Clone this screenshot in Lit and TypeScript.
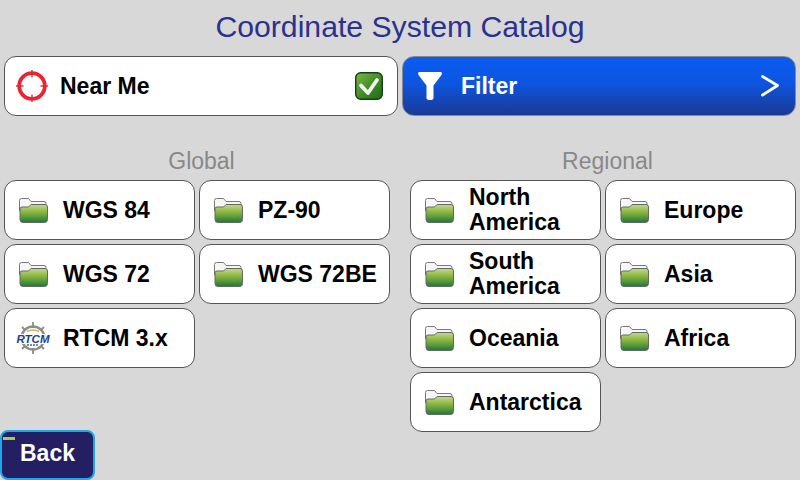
import { LitElement, html, css, svg } from "lit";
import { customElement } from "lit/decorators.js";

let uid = 0;
const folder = () => {
  const id = `fg${uid++}`;
  return html`<svg class="ico" width="29" height="25" viewBox="0 0 29 25">
    <defs><linearGradient id=${id} x1="0" y1="0" x2="0" y2="1">
      <stop offset="0" stop-color="#c4dc84"/><stop offset="0.45" stop-color="#86b33f"/><stop offset="1" stop-color="#1c7a38"/>
    </linearGradient></defs>
    <path d="M0.500 13V2.500q0-2 2-2h7l2.500 3h13q2 0 2 2v4" fill="#f6f6f6" stroke="#777" stroke-width="1"/>
    <path d="M1 21V11q0-2 2-2h6.500l2.500-2.500h14q2.500 0 2.500 2.500v12.500q0 3-3 3H4q-3 0-3-3z" fill="url(#${id})" stroke="#666" stroke-width="1"/>
  </svg>`;
};

const target = html`<svg class="target" width="32" height="32" viewBox="0 0 32 32">
  <path d="M16 0v7.500M16 24.500v7.500M0 16h7.500M24.500 16h7.500" stroke="#666" stroke-width="1.400"/>
  <circle cx="16" cy="16" r="12.800" fill="none" stroke="#ee2233" stroke-width="3.800"/>
</svg>`;

const check = html`<svg width="28" height="28" viewBox="0 0 28 28">
  <defs><linearGradient id="cg" x1="0" y1="0" x2="1" y2="1">
    <stop offset="0" stop-color="#7fb84a"/><stop offset="0.55" stop-color="#3f8a22"/><stop offset="1" stop-color="#1f6b14"/>
  </linearGradient></defs>
  <rect x="0.700" y="0.700" width="26.600" height="26.600" rx="5" fill="url(#cg)" stroke="#12401a" stroke-width="1.400"/>
  <path d="M6 13.500l7 7.500 9-13" fill="none" stroke="#f2f2f2" stroke-width="3.800" stroke-linecap="round" stroke-linejoin="round"/>
</svg>`;

const funnel = html`<svg width="24" height="28" viewBox="0 0 24 28">
  <path d="M1 0h22q1.500 0.500 0.500 3L15.500 13.500V26q0 2-3.500 2T8.500 26V13.500L0.500 3Q-0.500 0.500 1 0z" fill="#fff"/>
</svg>`;

const chevron = html`<svg width="18" height="22" viewBox="0 0 18 22">
  <path d="M1.500 1.500L16.500 10.500 1.500 20" fill="none" stroke="#fff" stroke-width="2.800" stroke-linecap="round" stroke-linejoin="round"/>
</svg>`;

const rtcm = html`<svg class="ico" width="36" height="34" viewBox="0 0 36 34">
  ${svg`<circle cx="18" cy="17" r="11.500" fill="none" stroke="#8f8f8f" stroke-width="2.400"/>
  <path d="M18 1v6M18 27v6M10 9l-3-3M26 9l3-3M10 25l-3 3M26 25l3 3" stroke="#8a8a8a" stroke-width="1.800"/>
  <path d="M12 10.500q6-3 12 0" fill="none" stroke="#d8b23c" stroke-width="1.600"/>
  <path d="M12 24h12" stroke="#3a6aa8" stroke-width="1.600" stroke-dasharray="2 1"/>`}
  <text x="18" y="22" text-anchor="middle" class="rtcm-t">RTCM</text>
</svg>`;

const globalItems = ["WGS 84", "PZ-90", "WGS 72", "WGS 72BE"];
const regionalItems = [
  "North America", "Europe", "South America", "Asia", "Oceania", "Africa", "Antarctica",
];

@customElement("app-root")
export class AppRoot extends LitElement {
  static styles = css`
    :host {
      display: block;
      width: 800px;
      height: 480px;
      background: #d8d8d8;
      font-family: "Liberation Sans", Arial, sans-serif;
      overflow: hidden;
    }
    .page { display: flex; flex-direction: column; height: 480px; }
    .title {
      flex: none;
      height: 56px;
      line-height: 54px;
      text-align: center;
      font-size: 30.200px;
      color: #2a3290;
    }
    .top { flex: none; display: flex; gap: 4px; padding: 0 4px; }
    .wide {
      box-sizing: border-box;
      flex: none;
      width: 394px;
      height: 60px;
      border-radius: 12px;
      display: flex;
      align-items: center;
      font-size: 23px;
      font-weight: bold;
    }
    .wide span { flex: 1; }
    .near {
      background: #fff;
      border: 1px solid #555;
      padding: 0 14px 0 11px;
      gap: 12px;
      color: #000;
    }
    .filter {
      background: linear-gradient(#0a5cf2 0%, #0d55e0 45%, #1b3a94 100%);
      border: 1px solid #8a8a8a;
      padding: 0 16px 0 15px;
      color: #fff;
      gap: 19px;
    }
    .cols { flex: none; height: 282px; display: flex; padding: 0 4px; gap: 20px; margin-top: 32px; }
    .col { width: 386px; }
    .head {
      height: 32px;
      line-height: 26px;
      padding-left: 9px;
      text-align: center;
      font-size: 23px;
      color: #888;
    }
    .grid { display: grid; grid-template-columns: 191px 191px; grid-auto-rows: 60px; gap: 4px; }
    .btn {
      box-sizing: border-box;
      background: #fff;
      border: 1px solid #555;
      border-radius: 12px;
      display: flex;
      align-items: center;
      padding: 0 0 0 14px;
      gap: 15px;
      font-size: 23px;
      line-height: 25px;
      font-weight: bold;
      color: #000;
    }
    .btn.logo { padding-left: 10px; gap: 12px; }
    .ico { flex: none; }
    .rtcm-t { font: italic bold 11.500px "Liberation Sans", sans-serif; fill: #1c3f8f; paint-order: stroke; stroke: #fff; stroke-width: 2px; }
    .back {
      flex: none;
      box-sizing: border-box;
      position: relative;
      width: 95px;
      height: 50px;
      background: #241f63;
      border: 2px solid #1ea7e8;
      border-radius: 8px;
      color: #fff;
      font-size: 23px;
      font-weight: bold;
      display: flex;
      align-items: center;
      justify-content: center;
      padding-bottom: 4px;
    }
    .led {
      position: absolute;
      left: 1px;
      top: 5px;
      width: 12px;
      height: 3px;
      background: #a5cc4a;
    }
  `;

  private item(label: string) {
    return html`<div class="btn">${folder()}<span>${label}</span></div>`;
  }

  render() {
    return html`<div class="page">
      <div class="title">Coordinate System Catalog</div>
      <div class="top">
        <div class="wide near">${target}<span>Near Me</span>${check}</div>
        <div class="wide filter">${funnel}<span>Filter</span>${chevron}</div>
      </div>
      <div class="cols">
        <div class="col">
          <div class="head">Global</div>
          <div class="grid">
            ${globalItems.map((l) => this.item(l))}
            <div class="btn logo">${rtcm}<span>RTCM 3.x</span></div>
          </div>
        </div>
        <div class="col">
          <div class="head">Regional</div>
          <div class="grid">${regionalItems.map((l) => this.item(l))}</div>
        </div>
      </div>
      <div class="back"><i class="led"></i>Back</div>
    </div>`;
  }
}
